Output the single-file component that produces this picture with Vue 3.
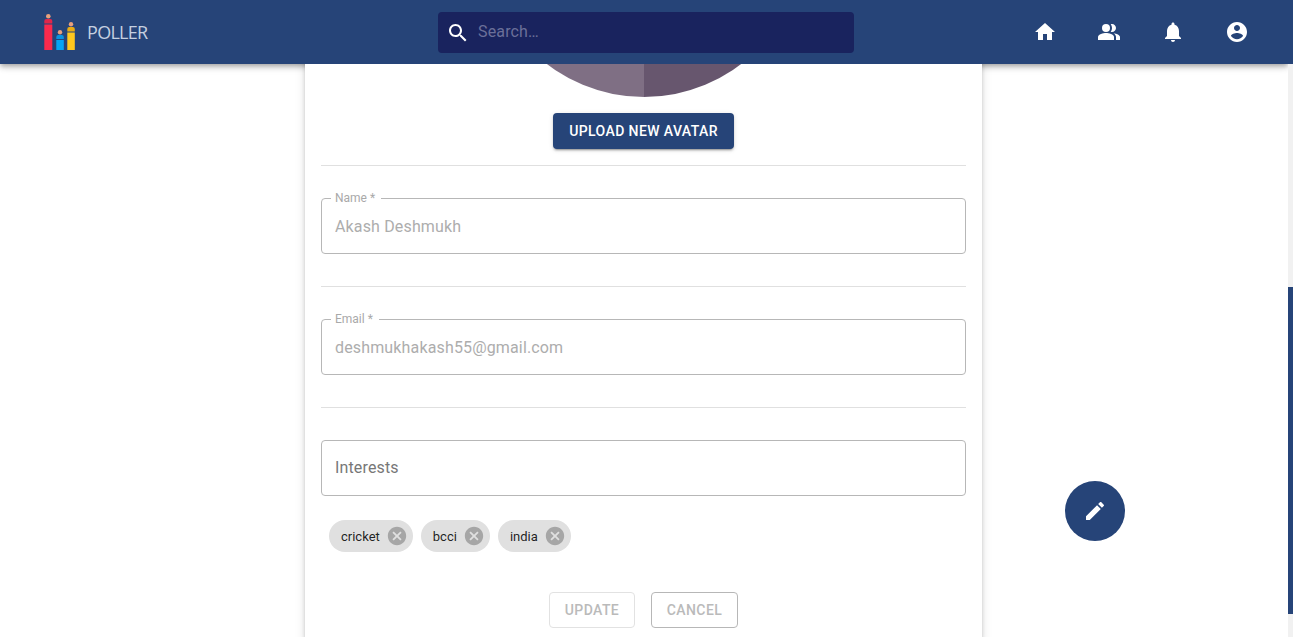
<script setup>
import { onMounted, ref } from 'vue'

const scroller = ref(null)
const chips = ['cricket', 'bcci', 'india']

onMounted(() => {
  scroller.value.scrollTop = 559
})
</script>

<template>
  <div class="app">
    <div class="bar-shadow" aria-hidden="true"></div>
    <header class="bar">
      <div class="brand">
        <svg class="logo" width="34" height="38" viewBox="0 0 34 38" aria-hidden="true">
          <circle cx="5.3" cy="4.3" r="2.3" fill="#e8a07c" />
          <path d="M1.3 9a2 2 0 0 1 2-2h4a2 2 0 0 1 2 2v2.500h-8z" fill="#e0264a" />
          <rect x="1.3" y="12.500" width="8" height="25.500" fill="#fb2a4d" />
          <circle cx="17" cy="20.3" r="2.2" fill="#e8a07c" />
          <path d="M13.3 25a2 2 0 0 1 2-2h3.5a2 2 0 0 1 2 2v2h-7.500z" fill="#0a93e0" />
          <rect x="13.300" y="28" width="7.500" height="10" fill="#05a5f5" />
          <circle cx="28" cy="12.300" r="2.200" fill="#e8a07c" />
          <path d="M24.300 17a2 2 0 0 1 2-2h3.500a2 2 0 0 1 2 2v2.500h-7.500z" fill="#e8ac14" />
          <rect x="24.300" y="20.500" width="7.500" height="17.500" fill="#fec81e" />
          <rect x="1" y="38" width="31.500" height="0.800" fill="#5a5f80" />
        </svg>
        <span class="brand-name">POLLER</span>
      </div>
      <label class="search">
        <svg class="search-icon" width="24" height="24" viewBox="0 0 24 24" aria-hidden="true">
          <path d="M15.5 14h-.79l-.28-.27C15.41 12.59 16 11.110 16 9.500 16 5.910 13.090 3 9.500 3S3 5.910 3 9.500 5.910 16 9.500 16c1.610 0 3.090-.59 4.230-1.570l.27.28v.79l5 4.990L20.490 19l-4.990-5zm-6 0C7.010 14 5 11.990 5 9.500S7.010 5 9.500 5 14 7.010 14 9.500 11.990 14 9.500 14z" />
        </svg>
        <input class="search-input" placeholder="Search…" />
      </label>
      <nav class="nav">
        <button class="nav-btn" aria-label="Home">
          <svg width="24" height="24" viewBox="0 0 24 24"><path d="M10 20v-6h4v6h5v-8h3L12 3 2 12h3v8z" /></svg>
        </button>
        <button class="nav-btn" aria-label="People">
          <svg width="24" height="24" viewBox="0 0 24 24">
            <path d="M16.670 13.130C18.040 14.060 19 15.320 19 17v3h4v-3c0-2.180-3.570-3.470-6.330-3.870z" />
            <circle cx="9" cy="8" r="4" />
            <path d="M15 12c2.210 0 4-1.790 4-4s-1.790-4-4-4c-.47 0-.91.1-1.330.24C14.500 5.270 15 6.580 15 8s-.5 2.730-1.330 3.760c.42.14.86.24 1.330.24z" />
            <path d="M9 13c-2.670 0-8 1.340-8 4v3h16v-3c0-2.660-5.330-4-8-4z" />
          </svg>
        </button>
        <button class="nav-btn" aria-label="Notifications">
          <svg width="24" height="24" viewBox="0 0 24 24"><path d="M12 22c1.100 0 2-.9 2-2h-4c0 1.100.89 2 2 2zm6-6v-5c0-3.070-1.640-5.640-4.500-6.320V4c0-.83-.67-1.500-1.500-1.500s-1.500.67-1.500 1.500v.68C7.630 5.360 6 7.920 6 11v5l-2 2v1h16v-1l-2-2z" /></svg>
        </button>
        <button class="nav-btn" aria-label="Account">
          <svg width="24" height="24" viewBox="0 0 24 24"><path d="M12 2C6.480 2 2 6.480 2 12s4.480 10 10 10 10-4.480 10-10S17.520 2 12 2zm0 3c1.660 0 3 1.340 3 3s-1.340 3-3 3-3-1.340-3-3 1.340-3 3-3zm0 14.200c-2.500 0-4.710-1.280-6-3.220.03-1.990 4-3.080 6-3.080 1.990 0 5.970 1.090 6 3.080-1.290 1.940-3.500 3.220-6 3.220z" /></svg>
        </button>
      </nav>
    </header>

    <div ref="scroller" class="scroller">
      <main class="card">
        <div class="avatar-section">
          <div class="avatar"></div>
          <button class="upload">Upload new avatar</button>
        </div>

        <section class="section">
          <div class="field">
            <span class="float-label">Name *</span>
            <input class="field-input" value="Akash Deshmukh" disabled />
          </div>
        </section>

        <section class="section">
          <div class="field">
            <span class="float-label">Email *</span>
            <input class="field-input" value="deshmukhakash55@gmail.com" disabled />
          </div>
        </section>

        <section class="section last">
          <div class="field">
            <input class="field-input interests" placeholder="Interests" />
          </div>
          <div class="chips">
            <span v-for="chip in chips" :key="chip" class="chip">
              <span class="chip-text">{{ chip }}</span>
              <svg class="chip-x" width="22" height="22" viewBox="0 0 24 24" aria-hidden="true">
                <path d="M12 2C6.470 2 2 6.470 2 12s4.470 10 10 10 10-4.470 10-10S17.530 2 12 2zm5 13.590L15.590 17 12 13.410 8.410 17 7 15.590 10.590 12 7 8.410 8.410 7 12 10.590 15.590 7 17 8.410 13.410 12 17 15.590z" />
              </svg>
            </span>
          </div>
          <div class="actions">
            <button class="action update" disabled>Update</button>
            <button class="action cancel">Cancel</button>
          </div>
        </section>
      </main>
    </div>

    <div class="rail" aria-hidden="true"><div class="thumb"></div></div>

    <button class="fab" aria-label="Edit">
      <svg width="24" height="24" viewBox="0 0 24 24"><path d="M3 17.250V21h3.750L17.810 9.940l-3.750-3.750L3 17.250zM20.710 7.040c.39-.39.39-1.020 0-1.410l-2.340-2.340c-.39-.39-1.020-.39-1.410 0l-1.830 1.830 3.750 3.750 1.830-1.830z" /></svg>
    </button>
  </div>
</template>

<style>
html,
body {
  margin: 0;
  overflow: hidden;
}
</style>

<style scoped>
.app {
  position: relative;
  height: 100vh;
  overflow: hidden;
  font-family: Roboto, "Liberation Sans", sans-serif;
  background: #fff;
}

.bar-shadow {
  position: absolute;
  top: 0;
  left: 0;
  right: 5px;
  height: 64px;
  z-index: 1;
  box-shadow: 0 2px 4px -1px rgba(0, 0, 0, 0.2), 0 4px 5px 0 rgba(0, 0, 0, 0.14), 0 1px 10px 0 rgba(0, 0, 0, 0.12);
}

.bar {
  position: absolute;
  inset: 0 0 auto 0;
  z-index: 5;
  height: 64px;
  display: grid;
  grid-template-columns: 438px 416px 1fr;
  align-items: center;
  background: #264478;
}

.brand {
  display: flex;
  align-items: center;
  padding-left: 43px;
  gap: 10px;
}

.logo {
  flex: none;
  margin-top: -3px;
  margin-bottom: -1px;
}

.brand-name {
  font-family: "Open Sans", sans-serif;
  font-size: 18px;
  letter-spacing: -0.7px;
  color: #c5d0e0;
}

.search {
  height: 41px;
  margin-top: 1px;
  display: flex;
  align-items: center;
  padding-left: 8px;
  gap: 8px;
  border-radius: 4px;
  background: #19235e;
}

.search-icon {
  flex: none;
  fill: #fff;
}

.search-input {
  flex: 1;
  min-width: 0;
  height: 100%;
  padding: 0 0 2px;
  box-sizing: border-box;
  border: 0;
  outline: 0;
  background: transparent;
  font: 400 16px Roboto, sans-serif;
  letter-spacing: 0.15px;
  color: #fff;
}

.search-input::placeholder {
  color: #6b7099;
  opacity: 1;
}

.nav {
  display: flex;
  justify-content: flex-end;
  padding-right: 24px;
}

.nav-btn {
  width: 64px;
  height: 64px;
  display: flex;
  align-items: center;
  justify-content: center;
  padding: 0;
  border: 0;
  background: transparent;
  fill: #fff;
}

.scroller {
  position: relative;
  z-index: 2;
  height: 100%;
  overflow-y: scroll;
  scrollbar-width: none;
}

.rail {
  position: absolute;
  top: 0;
  right: 0;
  bottom: 0;
  z-index: 3;
  width: 5px;
  background: #f1f1f1;
}

.thumb {
  height: 327px;
  margin-top: 287px;
  background: #264478;
}

.card {
  box-sizing: border-box;
  width: 677px;
  margin: 80px 0 38px 305px;
  padding: 226px 16px 16px;
  background: #fff;
  box-shadow: 0 3px 3px -2px rgba(0, 0, 0, 0.2), 0 3px 4px 0 rgba(0, 0, 0, 0.14), 0 1px 10px 0 rgba(0, 0, 0, 0.12);
}

.avatar-section {
  display: flex;
  flex-direction: column;
  align-items: center;
  gap: 16px;
  padding-bottom: 16px;
  border-bottom: 1px solid #e0e0e0;
}

.avatar {
  width: 320px;
  height: 320px;
  margin-top: 30px;
  border-radius: 50%;
  background: linear-gradient(90deg, #7f6f84 50%, #67566e 50%);
}

.upload {
  width: 181px;
  height: 36px;
  padding: 0;
  border: 0;
  border-radius: 4px;
  background: #264478;
  color: #fff;
  font: 500 14px Roboto, sans-serif;
  letter-spacing: 0.4px;
  text-transform: uppercase;
  box-shadow: 0 3px 1px -2px rgba(0, 0, 0, 0.2), 0 2px 2px 0 rgba(0, 0, 0, 0.14), 0 1px 5px 0 rgba(0, 0, 0, 0.12);
}

.section {
  padding: 32px 0;
  border-bottom: 1px solid #e0e0e0;
}

.section.last {
  padding-bottom: 0;
  border-bottom: 0;
}

.field {
  position: relative;
  height: 56px;
}

.float-label {
  position: absolute;
  top: -7px;
  left: 10px;
  padding: 0 6px 0 4px;
  background: #fff;
  font-size: 12px;
  line-height: 14px;
  color: #a9a9a9;
}

.field-input {
  box-sizing: border-box;
  width: 100%;
  height: 100%;
  padding: 0 13px;
  border: 1px solid #b7b7b7;
  border-radius: 4px;
  outline: 0;
  background: transparent;
  font: 400 16px Roboto, sans-serif;
  letter-spacing: 0.15px;
  color: #adadad;
  -webkit-text-fill-color: #adadad;
  opacity: 1;
}

.interests {
  padding-bottom: 1px;
  color: #333;
  -webkit-text-fill-color: #777;
}

.interests::placeholder {
  color: #777;
  opacity: 1;
}

.chips {
  display: flex;
  gap: 8px;
  margin-top: 24px;
  padding-left: 8px;
}

.chip {
  height: 32px;
  display: inline-flex;
  align-items: center;
  gap: 6px;
  padding: 0 5px 0 12px;
  border-radius: 16px;
  background: #e0e0e0;
  font-size: 13px;
  color: rgba(0, 0, 0, 0.87);
}

.chip-x {
  flex: none;
  fill: #a6a6a6;
}

.actions {
  display: flex;
  justify-content: center;
  gap: 16px;
  margin-top: 40px;
}

.action {
  height: 36px;
  box-sizing: border-box;
  padding: 0;
  border-radius: 4px;
  background: #fff;
  font: 500 14px Roboto, sans-serif;
  letter-spacing: 0.4px;
  text-transform: uppercase;
  color: #bababa;
}

.update {
  width: 86px;
  border: 1px solid #e2e2e2;
}

.cancel {
  width: 87px;
  border: 1px solid #b7b7b7;
}

.fab {
  position: absolute;
  left: 1065px;
  top: 481px;
  z-index: 4;
  width: 60px;
  height: 60px;
  display: flex;
  align-items: center;
  justify-content: center;
  padding: 0;
  border: 0;
  border-radius: 50%;
  background: #264478;
  fill: #fff;
}
</style>
